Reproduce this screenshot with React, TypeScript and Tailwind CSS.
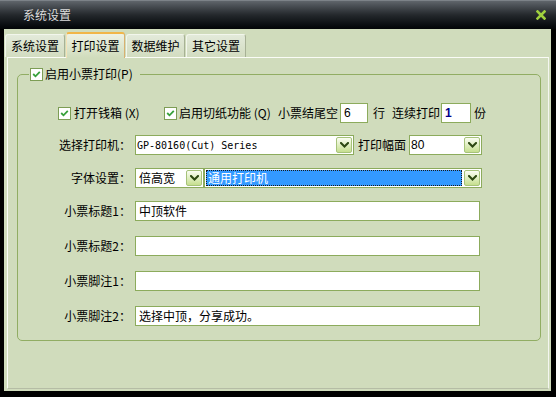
import React from "react";

const CJK = '"Noto Sans CJK SC", "Noto Sans", sans-serif';

function Chevron() {
  return (
    <svg width="9" height="6" viewBox="0 0 9 6">
      <path d="M1 1 L4.5 4.5 L8 1" stroke="#2d4812" strokeWidth="2" fill="none" strokeLinecap="square" />
    </svg>
  );
}

function DropBtn() {
  return (
    <div className="w-[16px] h-[16px] mr-[1px] shrink-0 border border-[#a6c27a] rounded-[2px] bg-gradient-to-b from-[#fbfdf3] to-[#c6df8e] flex items-center justify-center">
      <Chevron />
    </div>
  );
}

function CheckBox() {
  return (
    <div className="w-[13px] h-[13px] shrink-0 border border-[#7d9d55] bg-white flex items-center justify-center">
      <svg width="9" height="8" viewBox="0 0 9 8">
        <path d="M1.2 4 L3.5 6.3 L7.8 1.8" stroke="#36a03a" strokeWidth="1.8" fill="none" />
      </svg>
    </div>
  );
}

function Label({ children }: { children: React.ReactNode }) {
  return <div className="w-[113px] shrink-0 text-right whitespace-nowrap">{children}</div>;
}

function TextBox({ children }: { children?: React.ReactNode }) {
  return (
    <div className="ml-[4px] w-[345px] h-[20px] bg-white border border-[#8cab5c] flex items-center pl-[3px] whitespace-nowrap">
      {children}
    </div>
  );
}

export default function App() {
  return (
    <div
      className="w-[556px] h-[397px] bg-black flex flex-col overflow-hidden text-[12px] text-black"
      style={{ fontFamily: CJK }}
    >
      {/* Title bar */}
      <div className="h-[29px] shrink-0 flex items-center justify-between pl-[23px] pr-[10px] border-t border-[#7c8288] bg-gradient-to-b from-[#5f656b] via-[#24282c] to-[#030507]">
        <span className="text-[12px] text-[#dcdcdc]">系统设置</span>
        <svg width="10" height="10" viewBox="0 0 10 10">
          <path d="M1.5 1.5 L8.5 8.5 M8.5 1.5 L1.5 8.5" stroke="#9fd03e" strokeWidth="2.6" strokeLinecap="square" />
        </svg>
      </div>

      {/* Content */}
      <div className="flex-1 ml-[4px] mr-[5px] mb-[6px] bg-[#d0dcbc] flex flex-col">
        {/* Tabs */}
        <div className="h-[28px] shrink-0 flex items-end pl-[1px] text-[12px]">
          <div className="w-[60px] h-[23px] flex items-center justify-center rounded-t-[3px] border border-b-0 border-[#f2f6ec] border-r-[#a7b195] bg-gradient-to-b from-[#e3eada] to-[#d2dcc0]">
            系统设置
          </div>
          <div className="ml-[1px] w-[59px] h-[26px] -mb-[1px] relative z-10 flex items-center justify-center rounded-t-[3px] border-t-[2px] border-t-[#f1b648] border-l border-l-[#f4e2b8] border-r border-r-[#d8b070] bg-gradient-to-b from-[#eef2e4] to-[#d0dcbc]">
            打印设置
          </div>
          <div className="ml-[1px] w-[59px] h-[23px] flex items-center justify-center rounded-t-[3px] border border-b-0 border-[#f2f6ec] border-r-[#a7b195] bg-gradient-to-b from-[#e3eada] to-[#d2dcc0]">
            数据维护
          </div>
          <div className="ml-[1px] w-[60px] h-[23px] flex items-center justify-center rounded-t-[3px] border border-b-0 border-[#f2f6ec] border-r-[#a7b195] bg-gradient-to-b from-[#e3eada] to-[#d2dcc0]">
            其它设置
          </div>
        </div>

        {/* Panel */}
        <div className="flex-1 ml-[3px] mr-[2px] mb-[2px] border border-[#fafcf6] border-r-[#f4f6f0] border-b-[#b5bda5] flex flex-col">
          {/* Group box */}
          <div className="mt-[16px] ml-[9px] mr-[7px] h-[267px] relative border border-[#91ad63] rounded-[5px] pt-[28px] flex flex-col">
            {/* Legend */}
            <div className="absolute left-[11px] top-[-8px] h-[14px] flex items-center bg-[#d0dcbc] pl-[1px] pr-[7px]">
              <CheckBox />
              <span className="ml-[2px] whitespace-nowrap">启用小票打印(P)</span>
            </div>

            {/* Row 1 */}
            <div className="h-[20px] flex items-center whitespace-nowrap">
              <div className="ml-[40px]">
                <CheckBox />
              </div>
              <span className="ml-[3px] w-[67px]">打开钱箱 (X)</span>
              <div className="ml-[23px]">
                <CheckBox />
              </div>
              <span className="ml-[2px] w-[97px]">启用切纸功能 (Q)</span>
              <span className="ml-[2px] w-[62px]">小票结尾空</span>
              <div className="w-[28px] h-[20px] bg-white border border-[#8cab5c] flex items-center pl-[3px] text-[12px]" style={{ fontFamily: '"Liberation Sans", Arial, sans-serif' }}>
                6
              </div>
              <span className="ml-[5px] w-[12px]">行</span>
              <span className="ml-[7px] w-[48px]">连续打印</span>
              <div className="ml-[1px] w-[30px] h-[20px] bg-white border border-[#8cab5c] flex items-center pl-[3px] text-[12px] font-bold text-[#00008b]" style={{ fontFamily: '"Liberation Sans", Arial, sans-serif' }}>
                1
              </div>
              <span className="ml-[3px]">份</span>
            </div>

            {/* Row 2 */}
            <div className="mt-[12px] h-[20px] flex items-center">
              <Label>选择打印机：</Label>
              <div className="ml-[4px] w-[219px] h-[20px] bg-white border border-[#8cab5c] flex items-center justify-between">
                <span className="pl-[1px] text-[10px] whitespace-nowrap" style={{ fontFamily: '"DejaVu Sans Mono", "Liberation Mono", monospace' }}>
                  GP-80160(Cut) Series
                </span>
                <DropBtn />
              </div>
              <span className="ml-[4px] w-[48px] whitespace-nowrap">打印幅面</span>
              <div className="ml-[3px] w-[73px] h-[20px] bg-white border border-[#8cab5c] flex items-center justify-between">
                <span className="pl-[1px] text-[12px]" style={{ fontFamily: '"Liberation Sans", Arial, sans-serif' }}>80</span>
                <DropBtn />
              </div>
            </div>

            {/* Row 3 */}
            <div className="mt-[13px] h-[20px] flex items-center">
              <Label>字体设置：</Label>
              <div className="ml-[4px] w-[69px] h-[20px] bg-white border border-[#8cab5c] flex items-center justify-between">
                <span className="pl-[3px] whitespace-nowrap">倍高宽</span>
                <DropBtn />
              </div>
              <div className="w-[278px] h-[20px] bg-white border border-[#8cab5c] flex items-center">
                <div className="flex-1 h-[16px] ml-[1px] mr-[2px] bg-[#3399ff] border border-dotted border-[#1a1a1a] flex items-center pl-[1px] text-white whitespace-nowrap">
                  通用打印机
                </div>
                <DropBtn />
              </div>
            </div>

            {/* Row 4 */}
            <div className="mt-[13px] h-[20px] flex items-center">
              <Label>小票标题1：</Label>
              <TextBox>中顶软件</TextBox>
            </div>

            {/* Row 5 */}
            <div className="mt-[15px] h-[20px] flex items-center">
              <Label>小票标题2：</Label>
              <TextBox />
            </div>

            {/* Row 6 */}
            <div className="mt-[15px] h-[20px] flex items-center">
              <Label>小票脚注1：</Label>
              <TextBox />
            </div>

            {/* Row 7 */}
            <div className="mt-[15px] h-[20px] flex items-center">
              <Label>小票脚注2：</Label>
              <TextBox>选择中顶，分享成功。</TextBox>
            </div>
          </div>
        </div>
      </div>
    </div>
  );
}
